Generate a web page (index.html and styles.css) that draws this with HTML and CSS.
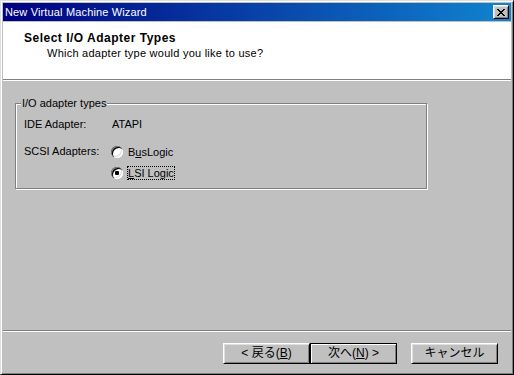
FILE: index.html
```html
<!DOCTYPE html>
<html lang="ja">
<head>
    <meta charset="UTF-8">
    <meta name="viewport" content="width=device-width, initial-scale=1.0">
    <title>New Virtual Machine Wizard</title>
    <link rel="stylesheet" href="styles.css">
</head>
<body>

    <div class="window">
        <div class="titlebar">
            <span class="title-text">New Virtual Machine Wizard</span>
            <button class="close-btn" aria-label="閉じる">
                <svg width="8" height="7" viewBox="0 0 8 7" shape-rendering="crispEdges">
                    <path d="M0 0h2v1h-2zM6 0h2v1h-2zM1 1h2v1h-2zM5 1h2v1h-2zM2 2h4v1h-4zM3 3h2v1h-2zM2 4h4v1h-4zM1 5h2v1h-2zM5 5h2v1h-2zM0 6h2v1h-2zM6 6h2v1h-2z" fill="#000"/>
                </svg>
            </button>
        </div>

        <div class="header">
            <div class="header-title">Select I/O Adapter Types</div>
            <div class="header-sub">Which adapter type would you like to use?</div>
        </div>

        <div class="content">
            <div class="group">
                <span class="group-legend">I/O adapter types</span>

                <div class="field">
                    <span class="field-label">IDE Adapter:</span>
                    <span class="field-value">ATAPI</span>
                </div>

                <div class="field field-radios">
                    <span class="field-label">SCSI Adapters:</span>
                    <div class="radios">
                        <div class="radio">
                            <span class="radio-box"></span>
                            <span class="radio-text">B<u>u</u>sLogic</span>
                        </div>
                        <div class="radio">
                            <span class="radio-box checked"></span>
                            <span class="radio-text focused"><u>L</u>SI Logic</span>
                        </div>
                    </div>
                </div>
            </div>
        </div>

        <div class="footer">
            <button class="btn">&lt; 戻る(<u>B</u>)</button>
            <button class="btn btn-default">次へ(<u>N</u>) &gt;</button>
            <button class="btn btn-cancel">キャンセル</button>
        </div>
    </div>

</body>
</html>
```

FILE: styles.css
```css
body {
    margin: 0;
    font-family: "Liberation Sans", "Noto Sans CJK JP", sans-serif;
    font-size: 11px;
    color: #000;
    background: #c0c0c0;
}
.window {
    width: 514px;
    height: 375px;
    box-sizing: border-box;
    display: flex;
    flex-direction: column;
    padding: 2px;
    background: #c0c0c0;
    border: 1px solid;
    border-color: #dfdfdf #000 #000 #dfdfdf;
    box-shadow: inset 1px 1px #fff, inset -1px -1px #808080;
}
.titlebar {
    height: 18px;
    margin-bottom: 1px;
    display: flex;
    align-items: center;
    justify-content: space-between;
    padding: 0 2px 0 2px;
    background: linear-gradient(to right, #000080, #1084d0);
    color: #fff;
    line-height: 18px;
}
.title-text {
    letter-spacing: 0.15px;
}
.close-btn {
    width: 16px;
    height: 14px;
    padding: 0;
    display: flex;
    align-items: center;
    justify-content: center;
    background: #c0c0c0;
    border: 1px solid;
    border-color: #fff #000 #000 #fff;
    box-shadow: inset 1px 1px #dfdfdf, inset -1px -1px #808080;
}
.header {
    height: 58px;
    box-sizing: border-box;
    padding: 9px 0 0 21px;
    background: #fff;
    border-bottom: 1px solid #808080;
}
.header-title {
    font-size: 12px;
    font-weight: bold;
    line-height: 14px;
    letter-spacing: 0.5px;
}
.header-sub {
    margin-top: 2px;
    padding-left: 23px;
    line-height: 13px;
    letter-spacing: 0.25px;
}
.content {
    flex: 1;
    border-top: 1px solid #fff;
    padding: 22px 0 0 12px;
}
.group {
    position: relative;
    width: 412px;
    height: 86px;
    box-sizing: border-box;
    padding: 14px 0 0 8px;
    border: 1px solid #808080;
    box-shadow: inset 1px 1px #fff, 1px 1px #fff;
}
.group-legend {
    position: absolute;
    top: -7px;
    left: 5px;
    padding: 0 1px;
    line-height: 13px;
    background: #c0c0c0;
}
.field {
    display: flex;
    line-height: 13px;
}
.field-label {
    width: 87px;
}
.field-value {
    margin-left: 1px;
}
.field-radios {
    margin-top: 10px;
    line-height: 21px;
}
.radio {
    display: flex;
    align-items: center;
    height: 21px;
}
.radio-box {
    position: relative;
    width: 12px;
    height: 12px;
    border-radius: 50%;
    background: #fff;
    box-shadow: inset 1px 1px #808080, inset 2px 2px #000, inset -1px -1px #fff, inset -2px -2px #dfdfdf;
}
.radio-box.checked::after {
    content: "";
    position: absolute;
    left: 4px;
    top: 4px;
    width: 4px;
    height: 4px;
    border-radius: 1px;
    background: #000;
}
.radio-text {
    margin-left: 4px;
    line-height: 12px;
    border: 1px dotted transparent;
}
.radio-text.focused {
    border-color: #000;
}
.footer {
    height: 42px;
    box-sizing: border-box;
    display: flex;
    justify-content: flex-end;
    align-items: flex-start;
    padding: 12px 13px 0 0;
    border-top: 1px solid #808080;
    box-shadow: inset 0 1px #fff;
}
.btn {
    width: 87px;
    height: 21px;
    padding: 0;
    font-family: "Liberation Sans", "Noto Sans CJK JP", sans-serif;
    font-size: 12px;
    line-height: 17px;
    color: #000;
    background: #c0c0c0;
    border: 1px solid;
    border-color: #fff #000 #000 #fff;
    box-shadow: inset 1px 1px #dfdfdf, inset -1px -1px #808080;
}
.btn-default {
    border-color: #000;
    box-shadow: inset 1px 1px #fff, inset -1px -1px #808080;
}
.btn-cancel {
    margin-left: 14px;
}
```
